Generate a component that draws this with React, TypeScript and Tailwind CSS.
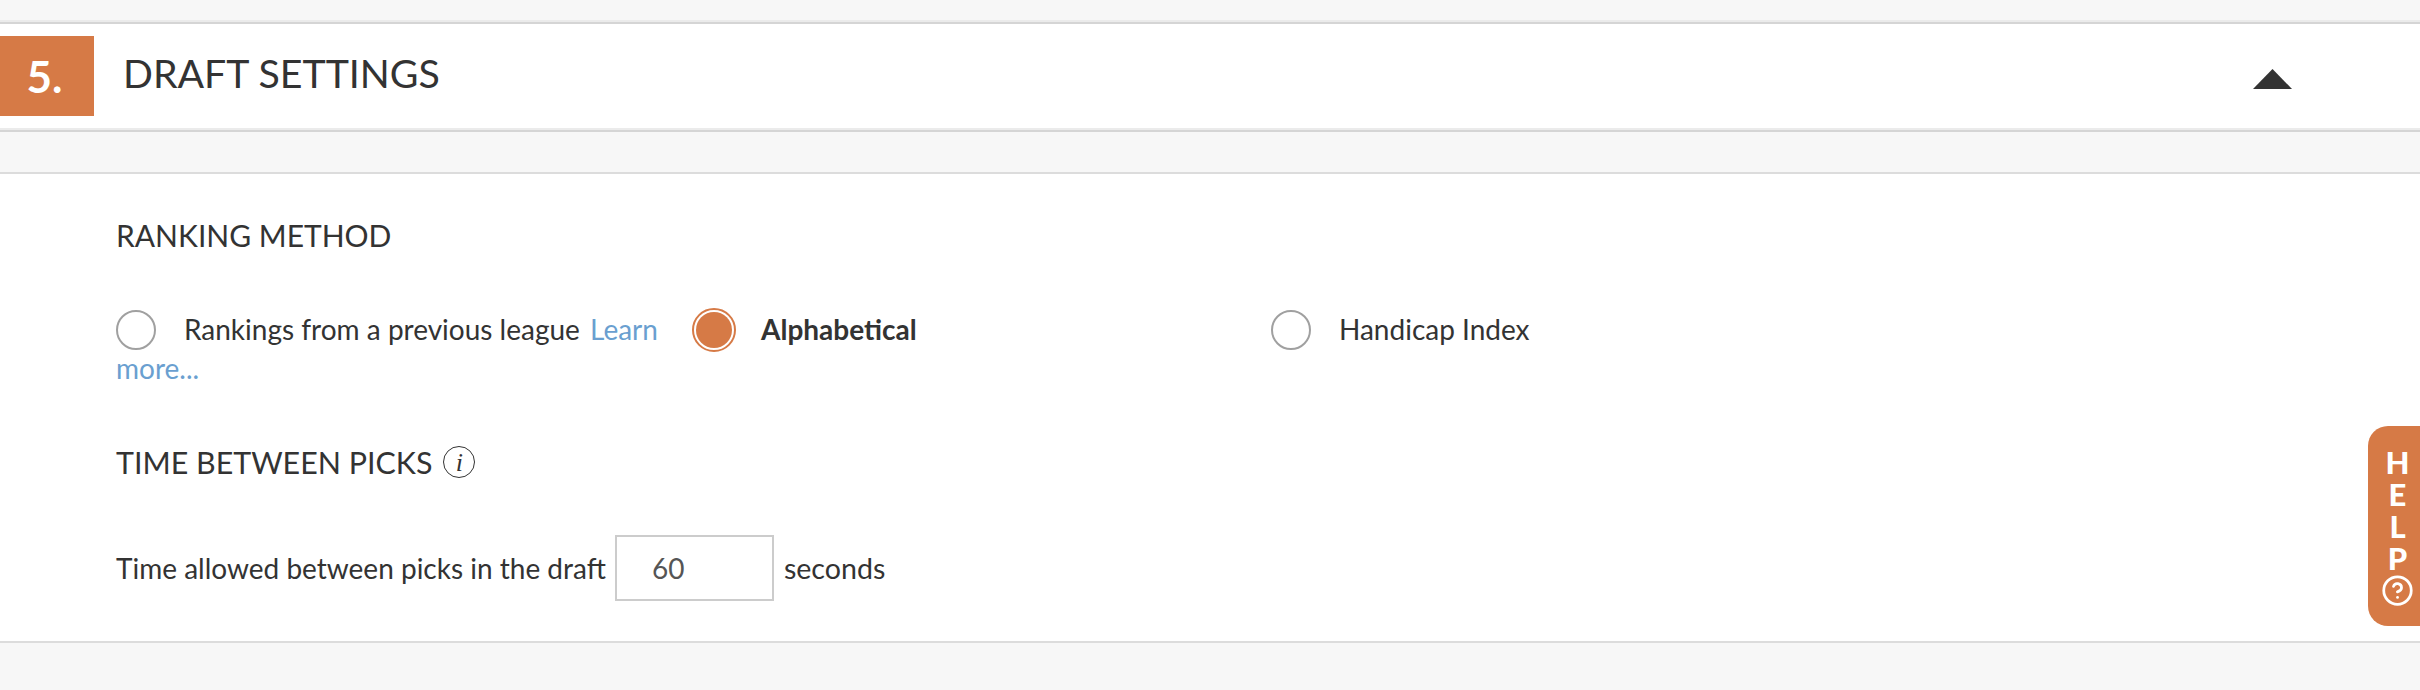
import { CircleHelp } from 'lucide-react';

const Radio = ({ checked }: { checked?: boolean }) =>
    checked ? (
        <span className="ml-[4px] inline-block h-[36px] w-[36px] rounded-full bg-[#d67a46] align-[-8px] outline-2 outline-offset-2 outline-[#d67a46]" />
    ) : (
        <span className="inline-block h-[40px] w-[40px] rounded-full border-2 border-[#a0a0a0] bg-white align-[-10px]" />
    );

export default function App() {
    return (
        <div className="relative h-[690px] w-[2420px] overflow-hidden bg-[#f7f7f7] font-['Lato',sans-serif] text-[#333333]">
            <div className="h-[20px]" />

            {/* section header */}
            <div className="h-[112px] border-y-2 border-t-[#ebebeb] border-b-[#d5d5d5]">
                <div className="h-[108px] border-y-2 border-t-[#d5d5d5] border-b-[#ebebeb] bg-white pt-[12px]">
                    <div className="flex items-start justify-between">
                        <div className="flex items-center">
                            <div className="flex h-[80px] w-[94px] items-center justify-center bg-[#d67a46] pr-[5px] text-[44px] font-bold text-white">
                                5.
                            </div>
                            <h2 className="ml-[29px] pb-[6px] text-[39.3px] leading-[70px]">DRAFT SETTINGS</h2>
                        </div>
                        <svg className="mt-[33px] mr-[128px]" width="39" height="20" viewBox="0 0 39 20">
                            <path d="M19.5 0 L39 20 L0 20 Z" fill="#333333" />
                        </svg>
                    </div>
                </div>
            </div>

            <div className="h-[40px]" />

            {/* settings */}
            <div className="h-[471px] border-y-2 border-[#dcdcdc] bg-white px-[116px] pt-[44px]">
                <h3 className="text-[30px] leading-[34px]">RANKING METHOD</h3>

                <div className="mt-[58px] grid h-[78px] grid-cols-[578px_577px_577px] text-[28px] leading-[37px]">
                    <div className="w-[560px]">
                        <Radio />
                        <span className="ml-[28px]">Rankings from a previous league</span>{' '}
                        <a className="ml-[3px] text-[#6a9fd0]">Learn more...</a>
                    </div>
                    <div className="mt-[1px] -ml-[2px]">
                        <Radio checked />
                        <span className="ml-[29px] font-bold">Alphabetical</span>
                    </div>
                    <div>
                        <Radio />
                        <span className="ml-[28px]">Handicap Index</span>
                    </div>
                </div>

                <div className="mt-[57px] flex items-center">
                    <h3 className="text-[30.4px] leading-[34px]">TIME BETWEEN PICKS</h3>
                    <span className="ml-[11px] flex h-[32px] w-[32px] items-center justify-center rounded-full border-[1.5px] border-[#333333] font-['Liberation_Serif',serif] text-[26px] italic">
                        i
                    </span>
                </div>

                <div className="mt-[56px] flex items-center text-[28px]">
                    <span>Time allowed between picks in the draft</span>
                    <input
                        readOnly
                        value="60"
                        className="ml-[9px] h-[66px] w-[159px] border-2 border-[#cccccc] bg-white pl-[35px] text-[#555555] outline-none"
                    />
                    <span className="ml-[10px] text-[28.6px]">seconds</span>
                </div>
            </div>

            {/* help tab */}
            <div className="absolute top-[426px] right-0 flex h-[200px] w-[52px] flex-col items-center rounded-l-[20px] bg-[#d67a46] pt-[20px] pl-[7px] text-[31px] leading-[32px] font-black text-white">
                <span>H</span>
                <span>E</span>
                <span>L</span>
                <span>P</span>
                <CircleHelp size={33} strokeWidth={2} />
            </div>
        </div>
    );
}
